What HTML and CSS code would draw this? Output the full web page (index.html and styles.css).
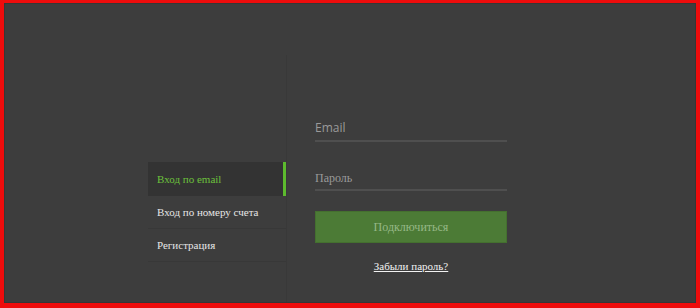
FILE: index.html
```html
<!DOCTYPE html>
<html lang="ru">
<head>
    <meta charset="UTF-8">
    <meta name="viewport" content="width=device-width, initial-scale=1.0">
    <title>Вход</title>
    <link rel="stylesheet" href="styles.css">
</head>
<body>

<div class="frame">
    <div class="inner">
        <div class="side">
            <ul class="tabs">
                <li class="tab active">Вход по email</li>
                <li class="tab">Вход по номеру счета</li>
                <li class="tab">Регистрация</li>
            </ul>
        </div>
        <div class="panel">
            <form class="login" onsubmit="return false">
                <input class="field field-email" type="email" placeholder="Email">
                <input class="field field-pass" type="password" placeholder="Пароль">
                <button class="submit" type="submit">Подключиться</button>
                <a class="forgot" href="#">Забыли пароль?</a>
            </form>
        </div>
    </div>
</div>

</body>
</html>
```

FILE: styles.css
```css
html, body {
    margin: 0;
    padding: 0;
    background: #3c3c3c;
}
.frame {
    width: 700px;
    height: 308px;
    box-sizing: border-box;
    border: 4px solid #ee0c0c;
    border-top-width: 3px;
    border-bottom-width: 5px;
    display: flex;
}
.inner {
    flex: 1;
    display: flex;
    border: 1px solid #363636;
    background: #3d3d3d;
}
.side {
    width: 281px;
    display: flex;
    justify-content: flex-end;
    padding-top: 158px;
}
.tabs {
    list-style: none;
    margin: 0;
    padding: 0;
    width: 138px;
}
.tab {
    height: 33px;
    box-sizing: border-box;
    padding-left: 9px;
    line-height: 33px;
    font-family: "Liberation Serif", serif;
    font-size: 11px;
    color: #e6e6e6;
    border-bottom: 1px solid #383838;
}
.tab.active {
    height: 34px;
    line-height: 34px;
    background: #333333;
    color: #6cc03c;
    border-bottom: none;
    border-right: 3px solid #5dbb2e;
}
.panel {
    flex: 1;
    margin-top: 51px;
    border-left: 1px solid #393939;
    padding-left: 28px;
    padding-top: 59px;
}
.login {
    width: 192px;
    display: flex;
    flex-direction: column;
}
.field {
    height: 26px;
    margin: 0;
    padding: 0;
    background: transparent;
    border: none;
    border-bottom: 2px solid #4f4f4f;
    outline: none;
    color: #ddd;
}
.field-email {
    font-family: "Open Sans", sans-serif;
    font-size: 12px;
}
.field-pass {
    margin-top: 21px;
    padding-top: 4px;
    box-sizing: border-box;
    height: 28px;
    font-family: "Liberation Serif", serif;
    font-size: 12px;
}
.field::placeholder {
    color: #9a9a9a;
}
.submit {
    margin-top: 20px;
    height: 32px;
    background: #4c7b36;
    border: 1px solid #44702f;
    color: #96b887;
    font-family: "Liberation Serif", serif;
    font-size: 12px;
    cursor: pointer;
}
.forgot {
    align-self: center;
    margin-top: 17px;
    color: #f2f2f2;
    font-family: "Liberation Serif", serif;
    font-size: 11px;
}
```
